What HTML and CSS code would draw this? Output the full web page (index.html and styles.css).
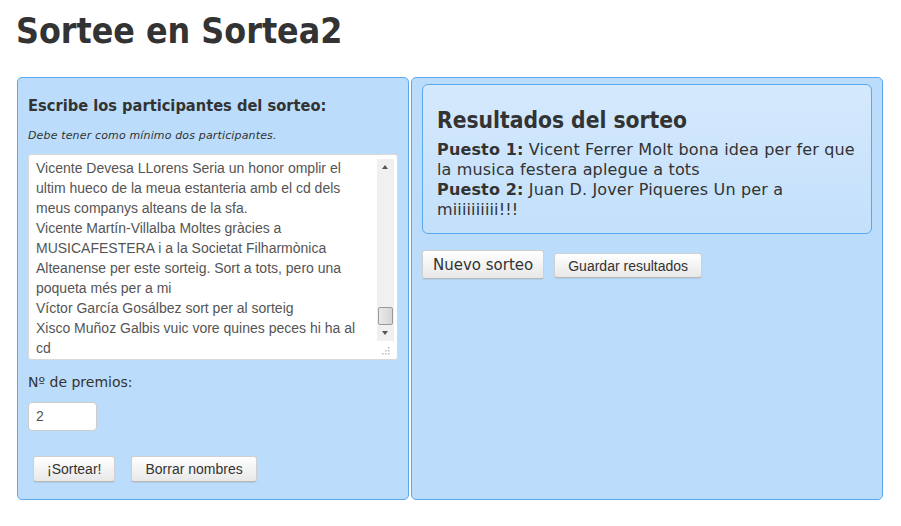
FILE: index.html
```html
<!DOCTYPE html>
<html lang="es">
<head>
<meta charset="utf-8">
<title>Sortee en Sortea2</title>
<link rel="stylesheet" href="styles.css">
</head>
<body>
<h1 class="page-title">Sortee en Sortea2</h1>
<div class="panels">
  <section class="panel panel-input">
    <h2 class="panel-heading">Escribe los participantes del sorteo:</h2>
    <p class="hint">Debe tener como mínimo dos participantes.</p>
    <div class="names-box">
      <div class="names-text">Vicente Devesa LLorens Seria un honor omplir el ultim hueco de la meua estanteria amb el cd dels meus companys alteans de la sfa.<br>Vicente Martín-Villalba Moltes gràcies a MUSICAFESTERA i a la Societat Filharmònica Alteanense per este sorteig. Sort a tots, pero una poqueta més per a mi<br>Víctor García Gosálbez sort per al sorteig<br>Xisco Muñoz Galbis vuic vore quines peces hi ha al cd</div>
      <div class="scrollbar">
        <span class="arrow up"></span>
        <span class="track"><span class="thumb"></span></span>
        <span class="arrow down"></span>
      </div>
      <svg class="grip" width="9" height="9" viewBox="0 0 9 9"><g fill="#bbb"><rect x="7" y="1" width="1.5" height="1.5"/><rect x="4" y="4" width="1.5" height="1.5"/><rect x="7" y="4" width="1.5" height="1.5"/><rect x="1" y="7" width="1.5" height="1.5"/><rect x="4" y="7" width="1.5" height="1.5"/><rect x="7" y="7" width="1.5" height="1.5"/></g></svg>
    </div>
    <label class="field-label">Nº de premios:</label>
    <div class="number-input">2</div>
    <div class="actions">
      <button class="btn">¡Sortear!</button>
      <button class="btn">Borrar nombres</button>
    </div>
  </section>
  <section class="panel panel-results">
    <div class="results-box">
      <h2 class="results-heading">Resultados del sorteo</h2>
      <p class="result"><b>Puesto 1:</b> Vicent Ferrer Molt bona idea per fer que la musica festera aplegue a tots</p>
      <p class="result"><b>Puesto 2:</b> Juan D. Jover Piqueres Un per a miiiiiiiiii!!!</p>
    </div>
    <div class="results-actions">
      <button class="btn btn-large">Nuevo sorteo</button>
      <button class="btn">Guardar resultados</button>
    </div>
  </section>
</div>
</body>
</html>
```
FILE: styles.css
```css
body {
  margin: 0;
  padding: 0 18px 0 17px;
  background: #fff;
  color: #333;
  font-family: "DejaVu Sans", Verdana, sans-serif;
}

.page-title {
  margin: 0 0 0 -1px;
  padding: 9px 0 0 0;
  height: 68px;
  box-sizing: border-box;
  font-family: "DejaVu Sans Condensed", "DejaVu Sans", sans-serif;
  font-weight: bold;
  font-size: 35.4px;
  color: #333;
  line-height: 44px;
}

.panels {
  display: flex;
  gap: 2px;
  margin-top: 9px;
}

.panel {
  background: #bbddfb;
  border: 1px solid #5ba8ee;
  border-radius: 5px;
  box-sizing: border-box;
  height: 423px;
}

.panel-input {
  width: 392px;
  padding: 0 10px;
}

.panel-results {
  flex: 1;
  padding: 6px 10px;
}

.panel-heading {
  margin: 18px 0 0 0;
  font-family: "DejaVu Sans Condensed", "DejaVu Sans", sans-serif;
  font-size: 16.3px;
  font-weight: bold;
  line-height: 20px;
}

.hint {
  margin: 12px 0 0 0;
  font-size: 11px;
  font-style: italic;
  letter-spacing: 0.15px;
  line-height: 16px;
}

.names-box {
  position: relative;
  margin-top: 10px;
  height: 206px;
  background: #fff;
  border: 1px solid #d9d9d9;
  border-radius: 3px;
  box-sizing: border-box;
  display: flex;
}

.names-text {
  flex: 1;
  padding: 3px 12px 0 7px;
  font-family: "Liberation Sans", Arial, sans-serif;
  font-size: 14px;
  line-height: 20px;
  color: #555;
}

.scrollbar {
  width: 17px;
  margin: 4px 3px 0 0;
  height: 182px;
  display: flex;
  flex-direction: column;
  background: #f0f0f0;
}

.arrow {
  height: 16px;
  position: relative;
}

.arrow::after {
  content: "";
  position: absolute;
  left: 5px;
  border-left: 3.5px solid transparent;
  border-right: 3.5px solid transparent;
}

.arrow.up::after {
  top: 6px;
  border-bottom: 4px solid #555;
}

.arrow.down::after {
  top: 6px;
  border-top: 4px solid #555;
}

.track {
  flex: 1;
  display: flex;
  flex-direction: column;
  justify-content: flex-end;
  padding: 0 1px;
}

.thumb {
  height: 16px;
  border: 1px solid #999;
  border-radius: 2px;
  background: linear-gradient(to right, #eaeaea, #d5d5d5);
}

.grip {
  position: absolute;
  right: 7px;
  bottom: 4px;
}

.field-label {
  display: block;
  margin-top: 14px;
  font-size: 14px;
  line-height: 16px;
}

.number-input {
  margin-top: 12px;
  width: 69px;
  height: 29px;
  box-sizing: border-box;
  background: #fff;
  border: 1px solid #ccc;
  border-radius: 4px;
  padding: 0 7px;
  font-family: "Liberation Sans", Arial, sans-serif;
  font-size: 14px;
  line-height: 27px;
  color: #555;
}

.actions {
  display: flex;
  gap: 16px;
  margin: 25px 0 0 5px;
}

.btn {
  font-family: "Liberation Sans", Arial, sans-serif;
  font-size: 14px;
  color: #333;
  height: 26px;
  padding: 0 13px;
  background: linear-gradient(to bottom, #ffffff, #e8e8e8);
  border: 1px solid #d0d0d0;
  border-bottom-color: #b8b8b8;
  border-radius: 3px;
  box-shadow: 0 1px 1px rgba(0, 0, 0, 0.08);
  line-height: 22px;
}

.results-box {
  background: linear-gradient(to bottom, #d5e9fd, #c3e0fb);
  border: 1px solid #5ba8ee;
  border-radius: 6px;
  height: 150px;
  box-sizing: border-box;
  padding: 19px 14px 0 14px;
}

.results-heading {
  margin: 0 0 4px 0;
  font-family: "DejaVu Sans Condensed", "DejaVu Sans", sans-serif;
  font-size: 22.6px;
  line-height: 32px;
}

.result {
  margin: 0;
  font-size: 16px;
  letter-spacing: 0.15px;
  line-height: 20px;
}

.results-actions {
  display: flex;
  align-items: flex-end;
  gap: 10px;
  margin-top: 16px;
}

.btn-large {
  height: 29px;
  padding: 0 10px;
  font-family: "DejaVu Sans", sans-serif;
  font-size: 15px;
}

.results-actions .btn:last-child {
  height: 25px;
  margin-bottom: 1px;
}
```
